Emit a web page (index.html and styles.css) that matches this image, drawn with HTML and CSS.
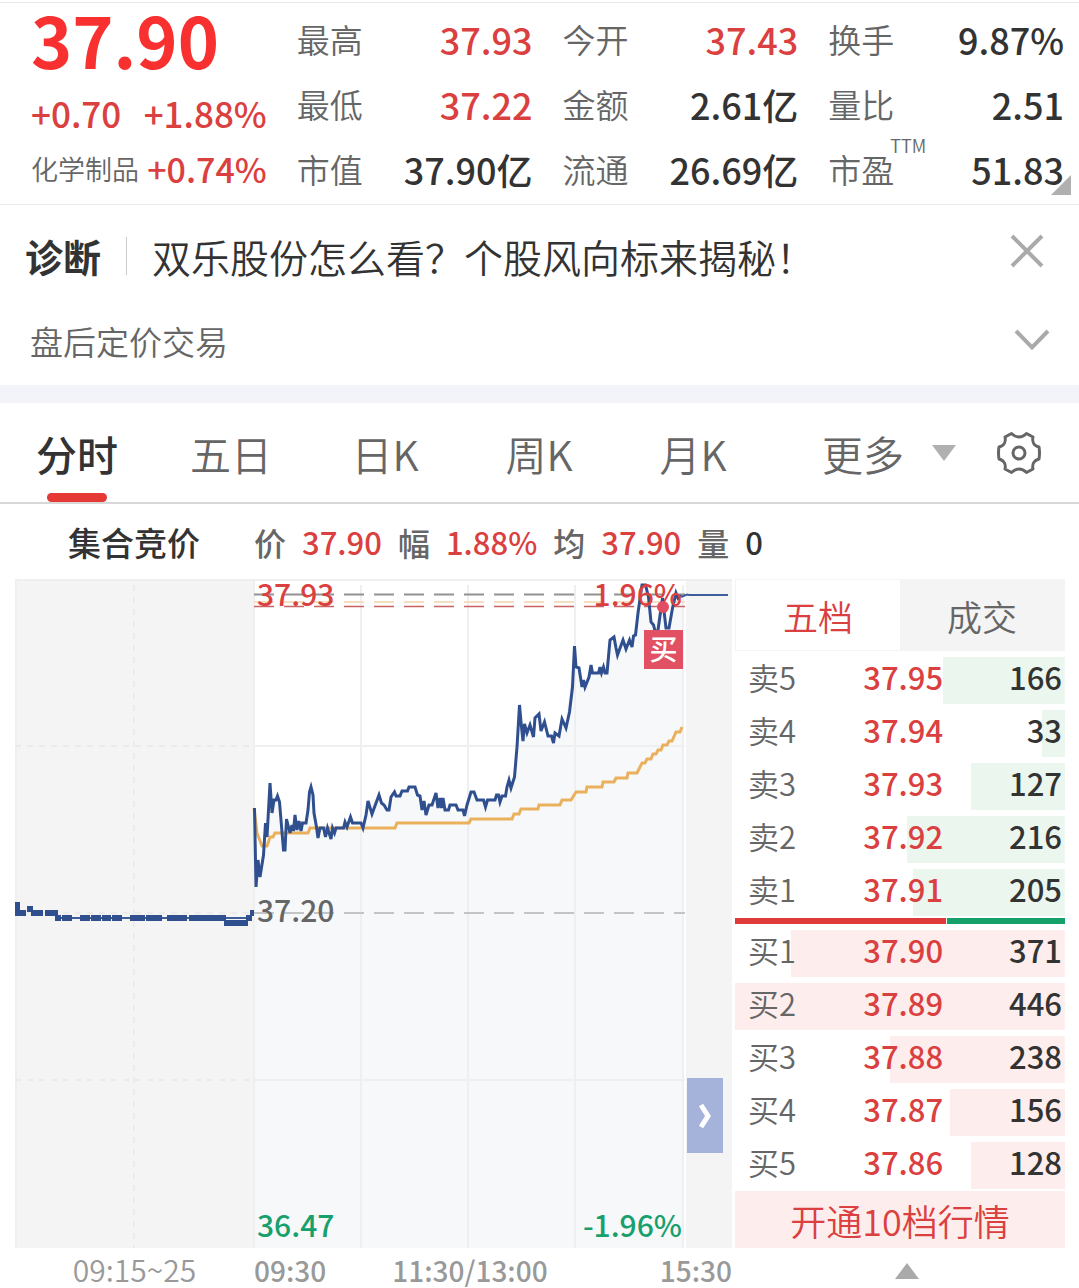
FILE: index.html
```html
<!DOCTYPE html>
<html lang="zh-CN">
<head>
<meta charset="utf-8">
<meta name="viewport" content="width=device-width, initial-scale=1">
<title>双乐股份</title>
<link rel="stylesheet" href="styles.css">
</head>
<body>
<header class="quote">
  <div class="summary">
    <div class="price">37.90</div>
    <div class="summary-row change"><span>+0.70</span><span>+1.88%</span></div>
    <div class="summary-row sector"><span class="sector-name">化学制品</span><span>+0.74%</span></div>
  </div>
  <dl class="stats">
    <div class="stat"><dt>最高</dt><dd class="up">37.93</dd></div>
    <div class="stat"><dt>今开</dt><dd class="up">37.43</dd></div>
    <div class="stat"><dt>换手</dt><dd>9.87%</dd></div>
    <div class="stat"><dt>最低</dt><dd class="up">37.22</dd></div>
    <div class="stat"><dt>金额</dt><dd>2.61亿</dd></div>
    <div class="stat"><dt>量比</dt><dd>2.51</dd></div>
    <div class="stat"><dt>市值</dt><dd>37.90亿</dd></div>
    <div class="stat"><dt>流通</dt><dd>26.69亿</dd></div>
    <div class="stat"><dt>市盈<span class="ttm">TTM</span></dt><dd>51.83</dd></div>
  </dl>
  <svg class="corner" width="20" height="20" viewBox="0 0 20 20" aria-hidden="true"><path d="M20 0V20H0Z" fill="#b0b0b0"/></svg>
</header>

<section class="notice">
  <strong class="notice-tag">诊断</strong>
  <a class="notice-link" href="#diagnosis">双乐股份怎么看？个股风向标来揭秘！</a>
  <button class="icon-button close" type="button" aria-label="关闭">
    <svg width="34" height="34" viewBox="0 0 34 34"><path d="M2 2L32 32M32 2L2 32" fill="none" stroke="#aaa" stroke-width="4"/></svg>
  </button>
</section>
<section class="after-hours">
  <span>盘后定价交易</span>
  <button class="icon-button" type="button" aria-label="展开">
    <svg width="36" height="26" viewBox="0 0 36 26"><path d="M2 3L18 19.500L34 3" fill="none" stroke="#aaa" stroke-width="4"/></svg>
  </button>
</section>

<nav class="periods">
  <button class="period active" type="button">分时</button>
  <button class="period" type="button">五日</button>
  <button class="period" type="button">日K</button>
  <button class="period" type="button">周K</button>
  <button class="period" type="button">月K</button>
  <div class="period-tools">
    <button class="period more" type="button">更多
      <svg width="24" height="16" viewBox="0 0 24 16" aria-hidden="true"><path d="M0 0H24L12 16Z" fill="#b0b0b0"/></svg>
    </button>
    <button class="icon-button" type="button" aria-label="设置">
      <svg width="44" height="44" viewBox="0 0 44 44" fill="none" stroke="#666" stroke-width="3" stroke-linejoin="round">
        <path d="M14.500 2.500C16 4 18.500 6 22 6S28 4 29.500 2.500L36 6C35 10 36.500 14.500 42 16Q43 22 42 28C36.500 29.500 35 34 36 38L29.500 41.500C28 40 25.500 38 22 38S16 40 14.500 41.500L8 38C9 34 7.500 29.500 2 28Q1 22 2 16C7.500 14.500 9 10 8 6Z"/>
        <circle cx="22" cy="22" r="6"/>
      </svg>
    </button>
  </div>
</nav>

<div class="readout">
  <strong>集合竞价</strong>
  <span class="key">价</span><span class="up">37.90</span>
  <span class="key">幅</span><span class="up">1.88%</span>
  <span class="key">均</span><span class="up">37.90</span>
  <span class="key">量</span><span>0</span>
</div>

<main class="board">
  <section class="chart">
    <div class="plot">
      <svg class="lines" viewBox="15 579 717 669" preserveAspectRatio="none" fill="none" aria-label="分时走势">
        <path d="M15 579H254V1248H15ZM686 579H732V1248H686Z" fill="#f4f4f4"/>
        <path d="M254 808L256 887L263 855L270 790L278 800L284 850L292 825L305 823L311 790L318 835L343 828L363 826L368 801L380 798L388 810L396 796L414 787L426 812L436 798L446 810L464 812L471 791L477 800L505 796L514 777L519 710L525 730L553 740L565 725L574 650L583 685L591 673L607 673L612 640L633 640L642 585L654 628L662 600L668 628L676 595H683V1248H254Z" fill="#f6f8fa"/>
        <g stroke="#efeff1" stroke-width="2">
          <path d="M15 580H732M254 746H685M254 1080H685M361 585V1248M468 585V1248M575 585V1248M683 585V1248M16 579V1248M254 579V1248"/>
          <path d="M134 585V1248M15 746H254M15 913H254M15 1080H254" stroke="#ebebeb" stroke-dasharray="6 6"/>
        </g>
        <g stroke-dasharray="20 10">
          <path d="M254 913H685" stroke="#c4c4c6" stroke-width="2"/>
          <path d="M254 594.500H685" stroke="#929292" stroke-width="2"/>
          <path d="M254 602H685" stroke="#f3dfbd" stroke-width="2"/>
          <path d="M254 606.500H685" stroke="#cb6262" stroke-width="1.500"/>
        </g>
        <path stroke="#eab05c" stroke-width="3" d="M254 808L257 833L262 846H267L270 837H273L275 833H308L310 828H395L397 823H469L471 819H512L514 814H519L521 809H538L539 805H560L562 800H571L576 792H586L587 787H602L603 782H614L616 778H627L628 773H637L642 763H645L647 759H651L653 754H656L658 750H661L663 745H667L669 741H672L676 732H680L682 727"/>
        <path stroke="#2f4f8f" stroke-width="3" d="M254.500 808L256 887L258 860L260 877L263.500 855L265.500 823L267 837L270 783L272 813L274 800H276L277.500 796L279.500 802L283.500 850H285L286.500 819L290 833L292 825L293.500 831L295 815L297 830L299 821L301 831L302.500 823H306L308 810L309.500 792L311 787L313 795L314 813L316.500 827L318 838L320 828H323.500L325.500 837L327.500 828L331 839L332.500 828L334.500 833L336 828H343.500L345 822L347 827L350.500 817L352.500 823H361L363 828L366 815L368 801L372 814L379 795L381.500 803L384 805L387 810H389L391 797L394.500 792L396 796H400L402 791H407.500L409 787H415L417.500 795L420 796L422 810L424 801L426 815L429 805H432L436 793L438 808L440 798L441.500 808L443 798L445 810H448.500L450 805H456L458 810H463L464.500 816L467 805L471 792H474L477 800H483.500L485.500 807L487.500 800H495L496.500 795H498.500L500 802L502 796H505.500L507 787L509 780L511 788L514.500 777L517 747L519.500 705L521 722L523 741L524.500 724L527 733L530 725L533.500 737L535 718L539 714L541 731L544.500 722L548 736H551.500L553.500 743L555 733L559 736L562 719L566 728L569.500 712L572.500 687L574.500 646L576 667L579 668L582 687L583.500 680L585 687L589 677L591 665L592.500 673H598.500L600 667L601.500 673L603.500 667L605 673H607L610 640L614 637L616 648L617.500 655L623 640L626 649L629.500 640L632 647L633.500 636L635.500 635L638 613L642 585H645.500L648.500 597L651 622L653.500 625L655.500 633L658 630L662.500 598L666 628H669L672.500 608L676 593L678 598L681 595"/>
        <path stroke="#3e5d9c" stroke-width="2" d="M681 597L687 594.500L689 595H728M60 918H250"/>
        <path stroke="#2f4f8f" stroke-width="6" d="M17 902V913H26M27 909H33M31 913H43M45 913H58M55 918H61M62 918H72M80 918H90M91 918H101M102 918H111M112 918H122M130 918H145M146 918H162M167 918H187M189 918H226M224 923H248M246 918H252M250 913H254"/>
      </svg>
      <span class="mark high up">37.93</span>
      <span class="mark high-rate up">1.96%</span>
      <span class="mark base">37.20</span>
      <span class="mark low down">36.47</span>
      <span class="mark low-rate down">-1.96%</span>
      <span class="trade-dot"></span>
      <span class="trade">买</span>
      <button class="expand" type="button" aria-label="展开盘后">
        <svg width="14" height="28" viewBox="0 0 14 28"><path d="M3 3L10 14L3 25" fill="none" stroke="#fff" stroke-width="5"/></svg>
      </button>
    </div>
    <div class="axis">
      <span class="auction">09:15~25</span>
      <span class="session"><span>09:30</span><span class="noon">11:30/13:00</span><span class="close-time">15:30</span></span>
    </div>
  </section>

  <aside class="book">
    <div class="book-tabs">
      <button class="book-tab active" type="button">五档</button>
      <button class="book-tab" type="button">成交</button>
    </div>
    <table class="levels asks">
      <tr style="--depth:37%"><th scope="row">卖5</th><td class="up">37.95</td><td>166</td></tr>
      <tr style="--depth:7%"><th scope="row">卖4</th><td class="up">37.94</td><td>33</td></tr>
      <tr style="--depth:28.500%"><th scope="row">卖3</th><td class="up">37.93</td><td>127</td></tr>
      <tr style="--depth:48%"><th scope="row">卖2</th><td class="up">37.92</td><td>216</td></tr>
      <tr style="--depth:46%"><th scope="row">卖1</th><td class="up">37.91</td><td>205</td></tr>
    </table>
    <div class="ratio"><span class="ratio-buy" style="width:64%"></span><span class="ratio-sell"></span></div>
    <table class="levels bids">
      <tr style="--depth:83%"><th scope="row">买1</th><td class="up">37.90</td><td>371</td></tr>
      <tr style="--depth:100%"><th scope="row">买2</th><td class="up">37.89</td><td>446</td></tr>
      <tr style="--depth:53%"><th scope="row">买3</th><td class="up">37.88</td><td>238</td></tr>
      <tr style="--depth:35%"><th scope="row">买4</th><td class="up">37.87</td><td>156</td></tr>
      <tr style="--depth:28.500%"><th scope="row">买5</th><td class="up">37.86</td><td>128</td></tr>
    </table>
    <button class="upgrade" type="button">开通10档行情</button>
    <svg class="collapse" width="24" height="16" viewBox="0 0 24 16" aria-hidden="true"><path d="M0 16H24L12 0Z" fill="#aaa"/></svg>
  </aside>
</main>
</body>
</html>
```
FILE: styles.css
```css
* { box-sizing: border-box; }

body {
  margin: 0;
  padding-top: 2px;
  background: #fff;
  color: #333;
  font-family: "Noto Sans CJK SC", sans-serif;
  font-size: 36px;
  font-weight: 500;
}

button {
  margin: 0;
  padding: 0;
  border: 0;
  background: none;
  color: inherit;
  font: inherit;
}

svg { display: block; }

.up { color: #db4040; }
.down { color: #17a06c; }

/* quote header */
.quote {
  position: relative;
  display: grid;
  grid-template-columns: calc((100% - 90px) / 4) 1fr;
  gap: 30px;
  padding: 4px 15px 2px 31px;
  border-top: 1px solid #ebebeb;
  border-bottom: 1px solid #ebebeb;
}

.summary { white-space: nowrap; }

.price {
  margin-bottom: 14px;
  color: #f93030;
  font-size: 70px;
  font-weight: 700;
  line-height: 64px;
}

.summary-row {
  display: flex;
  justify-content: space-between;
  align-items: center;
  color: #db4040;
  font-size: 35px;
  line-height: 56px;
}

.sector { font-size: 34px; }

.sector-name {
  color: #666;
  font-size: 27px;
  font-weight: 350;
}

.stats {
  display: grid;
  grid-template-columns: repeat(3, 1fr);
  column-gap: 30px;
  margin: 0;
  line-height: 65px;
}

.stat {
  display: flex;
  justify-content: space-between;
  white-space: nowrap;
}

.stat dt {
  position: relative;
  color: #666;
  font-size: 33px;
  font-weight: 350;
}

.stat dd { margin: 0; }

.ttm {
  position: absolute;
  top: -4px;
  left: 62px;
  font-size: 18px;
  line-height: 24px;
}

.corner {
  position: absolute;
  right: 8px;
  bottom: 9px;
}

/* notices */
.notice,
.after-hours {
  display: flex;
  align-items: center;
}

.notice {
  height: 102px;
  padding: 0 35px 0 25px;
}

.notice-tag {
  padding-right: 25px;
  border-right: 1px solid #ccc;
  font-size: 38px;
  font-weight: 700;
  line-height: 38px;
}

.notice-link {
  flex: 1;
  padding-left: 25px;
  color: #333;
  font-size: 39px;
  font-weight: 350;
  text-decoration: none;
  white-space: nowrap;
}

.close { padding-bottom: 10px; }

.after-hours {
  justify-content: space-between;
  height: 78px;
  padding: 0 29px 10px 30px;
  color: #666;
  font-size: 33px;
  font-weight: 350;
}

/* period tabs */
.periods {
  display: grid;
  grid-template-columns: repeat(5, 154fr) 309fr;
  height: 119px;
  border-top: 18px solid #f3f4f9;
  border-bottom: 2px solid #d8d8d8;
}

.period {
  position: relative;
  color: #666;
  font-size: 41px;
  font-weight: 350;
}

.period.active {
  color: #333;
  font-weight: 500;
}

.period.active::after {
  content: "";
  position: absolute;
  bottom: 0;
  left: 50%;
  width: 60px;
  height: 9px;
  margin-left: -30px;
  border-radius: 5px;
  background: #e53935;
}

.period-tools {
  display: flex;
  justify-content: space-between;
  align-items: center;
  padding: 0 38px 0 52px;
}

.more {
  display: flex;
  align-items: center;
  gap: 28px;
}

/* value readout */
.readout {
  display: flex;
  align-items: center;
  gap: 16px;
  height: 75px;
  padding: 0 68px;
  font-size: 31px;
  white-space: nowrap;
}

.readout strong {
  margin-right: 38px;
  font-size: 33px;
  font-weight: 500;
}

.key {
  color: #666;
  font-size: 32px;
}

/* chart and order book */
.board {
  display: grid;
  grid-template-columns: 717fr 330fr;
  gap: 3px;
  padding: 0 14px 0 15px;
}

.plot {
  position: relative;
  height: 669px;
}

.lines {
  width: 100%;
  height: 100%;
}

.mark {
  position: absolute;
  font-size: 30px;
  line-height: 36px;
}

.high, .high-rate { top: -4px; }
.low, .low-rate { bottom: 6px; }
.high, .base, .low { left: 242px; }
.high-rate, .low-rate { right: 50px; }

.base {
  top: 312px;
  color: #666;
}

.trade-dot {
  position: absolute;
  top: 22px;
  right: 63px;
  width: 12px;
  height: 12px;
  border-radius: 50%;
  background: #e34d63;
}

.trade {
  position: absolute;
  top: 51px;
  right: 49px;
  width: 39px;
  height: 39px;
  background: #e25064;
  color: #fff;
  font-size: 28px;
  line-height: 36px;
  text-align: center;
}

.expand {
  position: absolute;
  top: 499px;
  right: 9px;
  display: grid;
  place-items: center;
  width: 36px;
  height: 75px;
  background: #a5b2da;
}

.axis {
  display: grid;
  grid-template-columns: 1fr 2fr;
  height: 40px;
  color: #999;
  font-size: 28px;
  line-height: 44px;
}

.auction {
  font-size: 30px;
  font-weight: 350;
  line-height: 42px;
  text-align: center;
}

.session {
  display: grid;
  grid-template-columns: 138fr 156fr 184fr;
}

.noon { text-align: center; }
.close-time { text-align: right; }

.book-tabs {
  display: grid;
  grid-template-columns: 1fr 1fr;
  height: 72px;
  border: 1px solid #f4f4f4;
}

.book-tab {
  background: #f4f4f4;
  color: #666;
  font-size: 35px;
  font-weight: 350;
}

.book-tab.active {
  background: #fff;
  color: #db4040;
}

.levels {
  width: 100%;
  border-collapse: separate;
  border-spacing: 0 6px;
  font-size: 31px;
  line-height: 39px;
  table-layout: fixed;
}

.levels tr { background: linear-gradient(var(--tint), var(--tint)) right / var(--depth) 100% no-repeat; }
.asks { --tint: #eaf6ee; }
.bids { --tint: #fdeeed; }

.levels th,
.levels td {
  height: 47px;
  padding: 0 3px 8px 0;
  text-align: right;
}

.levels th {
  width: 30%;
  padding-left: 13px;
  color: #666;
  font-weight: 350;
  text-align: left;
}

.levels td:nth-child(2) { width: 34%; }

.ratio {
  display: flex;
  gap: 1px;
  height: 6px;
  margin-top: -4px;
}

.ratio-buy { background: #df3a3a; }

.ratio-sell {
  flex: 1;
  background: #16a06a;
}

.upgrade {
  display: block;
  width: 100%;
  height: 57px;
  margin-top: -4px;
  background: #fdeeed;
  color: #db4040;
  font-size: 36px;
  font-weight: 350;
}

.collapse { margin: 15px calc(50% - 19px) 0 auto; }
```
